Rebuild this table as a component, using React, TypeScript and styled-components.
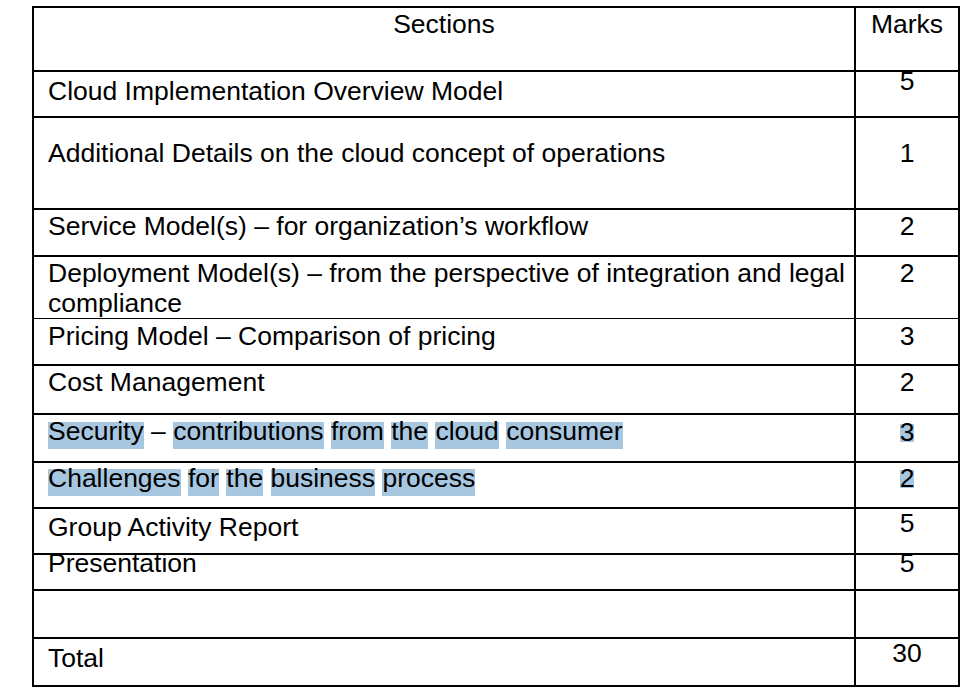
import React from "react";
import styled, { createGlobalStyle } from "styled-components";

const GlobalStyle = createGlobalStyle`
  html, body {
    margin: 0;
    padding: 0;
    background: #ffffff;
  }
  body {
    font-family: "Liberation Sans", Arial, Helvetica, sans-serif;
    color: #000000;
  }
`;

const Page = styled.div`
  padding: 6px 0 0 32px;
`;

const Table = styled.div`
  box-sizing: border-box;
  width: 928px;
  display: flex;
  flex-direction: column;
  gap: 2px;
  padding: 2px;
  background: #000000;
`;

const Row = styled.div<{ $h: number }>`
  display: grid;
  grid-template-columns: 820px 102px;
  gap: 2px;
  height: ${(p) => p.$h}px;
`;

const Cell = styled.div<{ $center?: boolean }>`
  background: #ffffff;
  box-sizing: border-box;
  padding: 0 ${(p) => (p.$center ? "0" : "14px")};
  text-align: ${(p) => (p.$center ? "center" : "left")};
  font-size: 26.5px;
  line-height: 30px;
  white-space: nowrap;
`;

const Text = styled.div<{ $top: number }>`
  margin-top: ${(p) => p.$top}px;
`;

const Mark = styled.span`
  padding-bottom: 3px;
  background: linear-gradient(to bottom, transparent 6px, #a7c7e1 6px);
`;

const MarkDigit = styled.span`
  background: linear-gradient(
    to bottom,
    transparent 7px,
    #a7c7e1 7px,
    #a7c7e1 25px,
    transparent 25px
  );
`;

type RowData = {
  h: number;
  label: React.ReactNode;
  marks: React.ReactNode;
  lt: number;
  mt: number;
  header?: boolean;
};

const hl = (words: string[]) =>
  words.map((w, i) => (
    <React.Fragment key={i}>
      {i > 0 && " "}
      {w === "–" ? w : <Mark>{w}</Mark>}
    </React.Fragment>
  ));

const rows: RowData[] = [
  { h: 62, label: "Sections", marks: "Marks", lt: 1, mt: 1, header: true },
  { h: 44, label: "Cloud Implementation Overview Model", marks: "5", lt: 4, mt: -6 },
  { h: 90, label: "Additional Details on the cloud concept of operations", marks: "1", lt: 20, mt: 20 },
  { h: 45, label: "Service Model(s) – for organization’s workflow", marks: "2", lt: 1, mt: 1 },
  {
    h: 60,
    label: (
      <>
        Deployment Model(s) – from the perspective of integration and legal
        <br />
        compliance
      </>
    ),
    marks: "2",
    lt: 1,
    mt: 1,
  },
  { h: 45, label: "Pricing Model – Comparison of pricing", marks: "3", lt: 2, mt: 2 },
  { h: 47, label: "Cost Management", marks: "2", lt: 1, mt: 1 },
  {
    h: 46,
    label: hl(["Security", "–", "contributions", "from", "the", "cloud", "consumer"]),
    marks: <MarkDigit>3</MarkDigit>,
    lt: 1,
    mt: 2,
  },
  {
    h: 44,
    label: hl(["Challenges", "for", "the", "business", "process"]),
    marks: <MarkDigit>2</MarkDigit>,
    lt: 0,
    mt: 0,
  },
  { h: 44, label: "Group Activity Report", marks: "5", lt: 2.5, mt: -1 },
  { h: 34, label: "Presentation", marks: "5", lt: -7, mt: -7.5 },
  { h: 46, label: "", marks: "", lt: 0, mt: 0 },
  { h: 46, label: "Total", marks: "30", lt: 3.5, mt: -1.5 },
];

export default function App() {
  return (
    <>
      <GlobalStyle />
      <Page>
        <Table>
          {rows.map((r, i) => (
            <Row key={i} $h={r.h}>
              <Cell $center={r.header}>
                <Text $top={r.lt}>{r.label}</Text>
              </Cell>
              <Cell $center>
                <Text $top={r.mt}>{r.marks}</Text>
              </Cell>
            </Row>
          ))}
        </Table>
      </Page>
    </>
  );
}
